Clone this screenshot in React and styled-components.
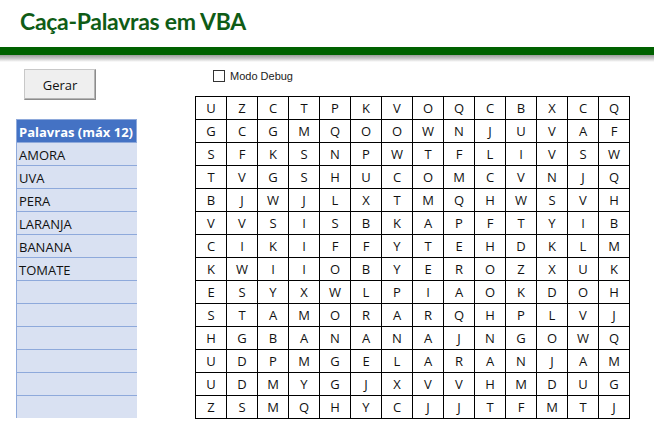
import styled, { createGlobalStyle } from 'styled-components'

const GlobalStyle = createGlobalStyle`
  body {
    margin: 0;
    background: #fff;
    font-family: "Open Sans", "Noto Sans", sans-serif;
  }
`

const Page = styled.div`
  width: 654px;
  height: 443px;
  overflow: hidden;
`

const Header = styled.div`
  height: 47px;
  padding: 0 0 5px 20px;
  box-sizing: border-box;
  display: flex;
  align-items: center;
`

const Title = styled.h1`
  margin: 0;
  font-family: Lato, "Open Sans", sans-serif;
  font-weight: 700;
  font-size: 23px;
  color: #0f5c16;
  letter-spacing: -0.3px;
`

const GreenBar = styled.div`
  height: 8px;
  background: #006100;
`

const Shadow = styled.div`
  height: 7px;
  background: linear-gradient(#9c9c9c, #c8c8c8 50%, #ffffff);
`

const Content = styled.div`
  display: flex;
`

const LeftCol = styled.div`
  width: 121px;
  margin-left: 16px;
  display: flex;
  flex-direction: column;
`

const Button = styled.button`
  width: 72px;
  height: 31px;
  margin: 7px 0 0 8px;
  background: #efefef;
  border: 1px solid #c8c8c8;
  border-right-color: #8c8c8c;
  border-bottom-color: #8c8c8c;
  box-shadow: inset -1px -1px 0 #b4b4b4;
  font-family: "Open Sans", sans-serif;
  font-size: 13px;
  color: #111;
  padding: 0;
`

const WordTable = styled.div`
  margin-top: 19px;
  display: flex;
  flex-direction: column;
`

const WordRow = styled.div`
  height: 23px;
  box-sizing: border-box;
  border-left: 1px solid #8ea9db;
  border-top: 1px solid #8ea9db;
  border-right: ${(p) => (p.head ? '1px solid #8ea9db' : 'none')};
  background: ${(p) => (p.head ? '#4472c4' : '#d9e1f2')};
  color: ${(p) => (p.head ? '#fff' : '#111')};
  font-weight: ${(p) => (p.head ? 700 : 400)};
  font-size: 13px;
  line-height: 24px;
  padding-left: 2px;
  white-space: nowrap;
`

const RightCol = styled.div`
  margin-left: 58px;
  display: flex;
  flex-direction: column;
`

const DebugLabel = styled.label`
  margin: 8px 0 0 18px;
  height: 26px;
  display: flex;
  align-items: flex-start;
  gap: 5px;
  font-family: "Liberation Sans", Arial, sans-serif;
  font-size: 11px;
  color: #222;
`

const Box = styled.span`
  width: 12px;
  height: 12px;
  box-sizing: border-box;
  border: 1px solid #333;
  background: #fff;
`

const Grid = styled.div`
  display: grid;
  grid-template-columns: repeat(14, 31px);
  grid-auto-rows: 23px;
  border-left: 1px solid #000;
  border-top: 1px solid #000;
  width: max-content;
`

const Cell = styled.div`
  border-right: 1px solid #000;
  border-bottom: 1px solid #000;
  display: flex;
  align-items: center;
  justify-content: center;
  font-size: 13px;
  color: #111;
`

const letters = [
  'UZCTPKVOQCBXCQ',
  'GCGMQOOWNJUVAF',
  'SFKSNPWTFLIVSW',
  'TVGSHUCOMCVNJQ',
  'BJWJLXTMQHWSVH',
  'VVSISBKAPFTYIB',
  'CIKIFFYTEHDKLM',
  'KWIIOBYEROZXUK',
  'ESYXWLPIAOKDOH',
  'STAMORARQHPLVJ',
  'HGBANANAJNGOWQ',
  'UDPMGELARANJAM',
  'UDMYGJXVVHMDUG',
  'ZSMQHYCJJTFMTJ',
]

const words = ['AMORA', 'UVA', 'PERA', 'LARANJA', 'BANANA', 'TOMATE', '', '', '', '', '', '']

export default function App() {
  return (
    <Page>
      <GlobalStyle />
      <Header>
        <Title>Caça-Palavras em VBA</Title>
      </Header>
      <GreenBar />
      <Shadow />
      <Content>
        <LeftCol>
          <Button>Gerar</Button>
          <WordTable>
            <WordRow head>Palavras (máx 12)</WordRow>
            {words.map((w, i) => (
              <WordRow key={i}>{w}</WordRow>
            ))}
          </WordTable>
        </LeftCol>
        <RightCol>
          <DebugLabel>
            <Box />
            Modo Debug
          </DebugLabel>
          <Grid>
            {letters.map((row, r) =>
              row.split('').map((ch, c) => <Cell key={r + '-' + c}>{ch}</Cell>)
            )}
          </Grid>
        </RightCol>
      </Content>
    </Page>
  )
}
